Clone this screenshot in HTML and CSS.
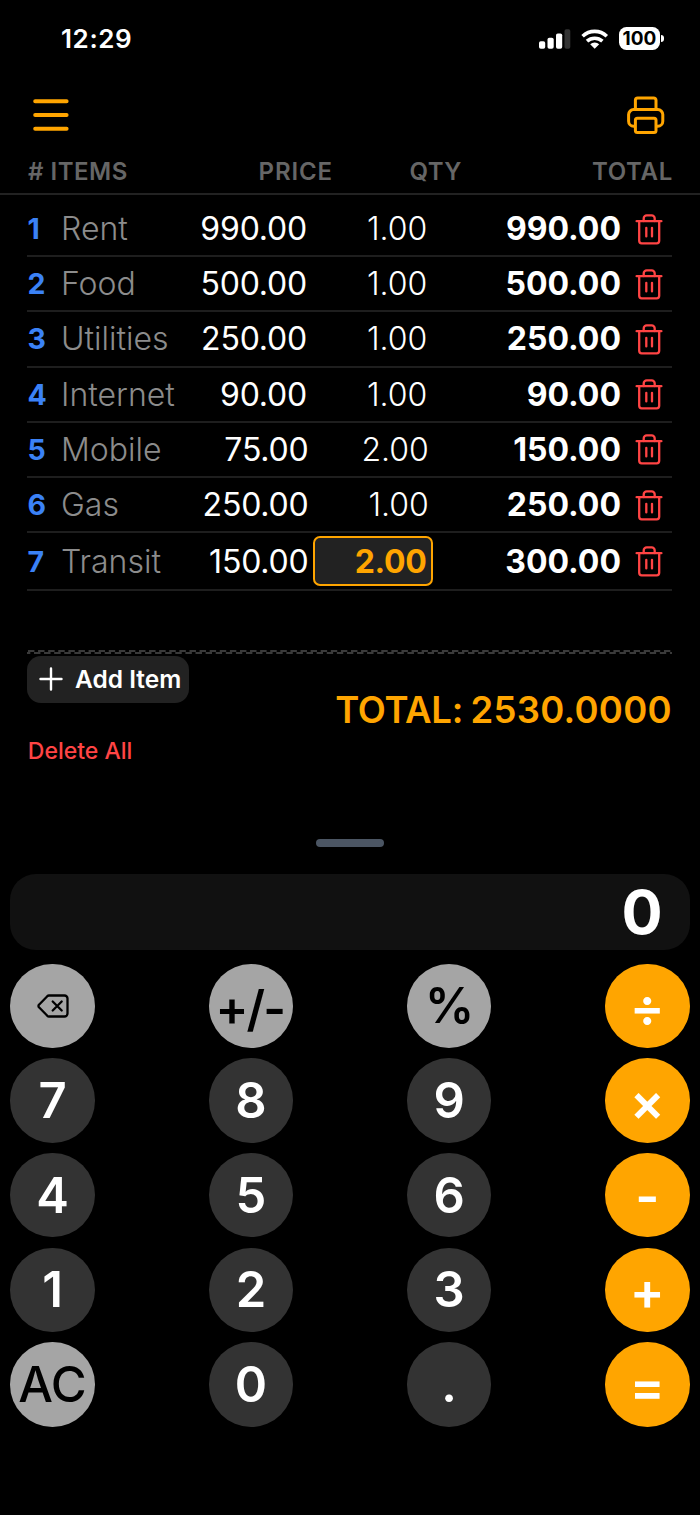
FILE: index.html
```
<!DOCTYPE html>
<html lang="en">
<head>
    <meta charset="UTF-8">
    <meta name="viewport" content="width=device-width, initial-scale=1.0">
    <title>Item Calculator</title>
    <link rel="stylesheet" href="styles.css">
</head>
<body>
    <svg class="sprite" aria-hidden="true">
        <symbol id="trash" viewBox="0 0 28 32">
            <g fill="none" stroke="currentColor" stroke-width="2.3" stroke-linecap="round" stroke-linejoin="round">
                <path d="M1.6 8.2h24.800"/>
                <path d="M8.7 8V5.4a3 3 0 0 1 3-3h5a3 3 0 0 1 3 3V8"/>
                <path d="M4.2 8.2v19.6a2.5 2.5 0 0 0 2.5 2.5h15a2.5 2.5 0 0 0 2.5-2.5v-19.6"/>
                <path d="M11.300 14.800v8.600M17 14.800v8.600"/>
            </g>
        </symbol>
    </svg>
    <main>
        <div class="status-bar">
            <span class="clock">12:29</span>
            <div class="status-icons">
                <svg class="signal" width="32" height="20" viewBox="0 0 32 20" fill="#fff">
                    <rect x="0" y="12.3" width="6.2" height="7.4" rx="1.8"/>
                    <rect x="8.5" y="8.7" width="6.2" height="11" rx="1.8"/>
                    <rect x="17" y="4.5" width="6.2" height="15.2" rx="1.8"/>
                    <rect x="25.5" y="0.2" width="5.8" height="19.5" rx="1.8" fill="#333"/>
                </svg>
                <svg class="wifi" width="28" height="20" viewBox="0 0 28 20">
                    <g fill="none" stroke="#fff" stroke-width="3.6">
                        <path d="M1.6 7.2a17.6 17.6 0 0 1 24.2 0"/>
                        <path d="M6 12.2a11.4 11.4 0 0 1 15.4 0"/>
                    </g>
                    <path d="M13.7 19.8l-4.5-4.5a6.5 6.5 0 0 1 9 0z" fill="#fff"/>
                </svg>
                <div class="battery">100</div>
            </div>
        </div>

        <header>
            <svg class="menu" width="38" height="36" viewBox="0 0 38 36" stroke="#ffa500" stroke-width="4" stroke-linecap="round">
                <path d="M3.2 4.2h31.4M3.2 18h31.4M3.2 31.8h31.4"/>
            </svg>
            <svg class="printer" width="40" height="40" viewBox="0 0 40 40" fill="none" stroke="#ffa500" stroke-width="3" stroke-linejoin="round">
                <path d="M9.4 31.2H7.6a5 5 0 0 1-5-5v-6.6a5 5 0 0 1 5-5h24.2a5 5 0 0 1 5 5v6.6a5 5 0 0 1-5 5H30"/>
                <rect x="9.4" y="23.2" width="20.6" height="14.4" rx="2"/>
                <path d="M9.4 14.6V5.3A2.3 2.3 0 0 1 11.7 3h16A2.3 2.3 0 0 1 30 5.3v9.3"/>
            </svg>
        </header>

        <div class="columns">
            <span class="col-items"># ITEMS</span>
            <span class="col-price">PRICE</span>
            <span class="col-qty">QTY</span>
            <span class="col-total">TOTAL</span>
        </div>

        <div class="items">
            <div class="row">
                <span class="num">1</span><span class="name">Rent</span><span class="price">990.00</span><span class="qty">1.00</span><span class="total">990.00</span>
                <svg class="trash"><use href="#trash"/></svg>
            </div>
            <div class="row">
                <span class="num">2</span><span class="name">Food</span><span class="price">500.00</span><span class="qty">1.00</span><span class="total">500.00</span>
                <svg class="trash"><use href="#trash"/></svg>
            </div>
            <div class="row">
                <span class="num">3</span><span class="name">Utilities</span><span class="price">250.00</span><span class="qty">1.00</span><span class="total">250.00</span>
                <svg class="trash"><use href="#trash"/></svg>
            </div>
            <div class="row">
                <span class="num">4</span><span class="name">Internet</span><span class="price">90.00</span><span class="qty">1.00</span><span class="total">90.00</span>
                <svg class="trash"><use href="#trash"/></svg>
            </div>
            <div class="row wide">
                <span class="num">5</span><span class="name">Mobile</span><span class="price">75.00</span><span class="qty">2.00</span><span class="total">150.00</span>
                <svg class="trash"><use href="#trash"/></svg>
            </div>
            <div class="row wide">
                <span class="num">6</span><span class="name">Gas</span><span class="price">250.00</span><span class="qty">1.00</span><span class="total">250.00</span>
                <svg class="trash"><use href="#trash"/></svg>
            </div>
            <div class="row wide editing">
                <span class="num">7</span><span class="name">Transit</span><span class="price">150.00</span><span class="qty active">2.00</span><span class="total">300.00</span>
                <svg class="trash"><use href="#trash"/></svg>
            </div>
        </div>

        <div class="summary">
            <div class="tear"></div>
            <div class="summary-body">
                <div class="actions">
                    <button class="add">
                        <svg width="24" height="24" viewBox="0 0 24 24" stroke="#fff" stroke-width="2.4" stroke-linecap="round">
                            <path d="M12 1.5v21M1.5 12h21"/>
                        </svg>
                        Add Item
                    </button>
                    <button class="delete">Delete All</button>
                </div>
                <div class="grand-total">TOTAL: <span class="amount">2530.0000</span></div>
            </div>
        </div>

        <div class="handle"></div>
        <div class="screen">0</div>

        <div class="keys">
            <button class="key light">
                <svg width="32" height="24" viewBox="0 0 32 24" fill="none" stroke="#000" stroke-width="2.3" stroke-linecap="round" stroke-linejoin="round">
                    <path d="M12 1.5h15.5a3 3 0 0 1 3 3v15a3 3 0 0 1-3 3H12a2.5 2.5 0 0 1-1.7-.7L2 13.300a1.800 1.800 0 0 1 0-2.600l8.300-8.500A2.500 2.500 0 0 1 12 1.500z"/>
                    <path d="M15.7 7.5l9 9M24.7 7.5l-9 9"/>
                </svg>
            </button>
            <button class="key light sign">+/-</button>
            <button class="key light">%</button>
            <button class="key op">÷</button>
            <button class="key">7</button>
            <button class="key">8</button>
            <button class="key">9</button>
            <button class="key op">×</button>
            <button class="key">4</button>
            <button class="key">5</button>
            <button class="key">6</button>
            <button class="key op">-</button>
            <button class="key">1</button>
            <button class="key">2</button>
            <button class="key">3</button>
            <button class="key op">+</button>
            <button class="key light clear">AC</button>
            <button class="key">0</button>
            <button class="key">.</button>
            <button class="key op">=</button>
        </div>
    </main>
</body>
</html>
```

FILE: styles.css
```
* {
    box-sizing: border-box;
}
body {
    margin: 0;
    background-color: #000;
    color: #fff;
    font-family: Inter, "Liberation Sans", sans-serif;
}
main {
    width: 700px;
    height: 1515px;
    display: flex;
    flex-direction: column;
    overflow: hidden;
}
button {
    margin: 0;
    padding: 0;
    border: none;
    background: none;
    font-family: inherit;
    color: inherit;
    cursor: pointer;
}
.sprite {
    display: none;
}

/* status bar */
.status-bar {
    height: 77px;
    padding: 0 40px 0 61px;
    display: flex;
    justify-content: space-between;
    align-items: center;
}
.clock {
    font-size: 26px;
    font-weight: 600;
    letter-spacing: 0.6px;
}
.status-icons {
    display: flex;
    align-items: center;
}
.wifi {
    margin-left: 10px;
}
.battery {
    width: 41px;
    height: 23px;
    margin-left: 10px;
    border-radius: 7.5px;
    background-color: #fff;
    color: #000;
    font-size: 19px;
    font-weight: 700;
    line-height: 23px;
    text-align: center;
    position: relative;
}
.battery::after {
    content: "";
    position: absolute;
    right: -4px;
    top: 8px;
    width: 3px;
    height: 7px;
    border-radius: 0 3px 3px 0;
    background-color: #fff;
}

header {
    height: 76px;
    padding: 0 34px 0 32px;
    display: flex;
    justify-content: space-between;
    align-items: center;
}

/* item list */
.columns {
    height: 42px;
    padding: 0 27px 4px 28px;
    display: flex;
    align-items: center;
    border-bottom: 2px solid #222;
    color: #666;
    font-size: 24px;
    font-weight: 600;
    letter-spacing: 0.5px;
}
.col-items {
    width: 154px;
}
.col-price {
    width: 151px;
    text-align: right;
    letter-spacing: 0.9px;
}
.col-qty {
    width: 129px;
    text-align: right;
}
.col-total {
    flex: 1;
    text-align: right;
    letter-spacing: 0.7px;
}
.items {
    padding: 7px 28px 0 27px;
}
.row {
    height: 55.2px;
    display: flex;
    align-items: center;
    border-bottom: 2px solid #1e1e1e;
    font-size: 32px;
}
.num {
    width: 34px;
    padding-left: 0.5px;
    color: #3b82f6;
    font-size: 28.5px;
    font-weight: 700;
}
.name {
    width: 120px;
    color: #8c8c8c;
    font-weight: 300;
}
.price {
    width: 126px;
    text-align: right;
    letter-spacing: -0.2px;
}
.qty {
    width: 121px;
    padding-right: 0.7px;
    font-weight: 300;
    text-align: right;
}
.total {
    width: 193px;
    font-weight: 700;
    text-align: right;
}
.trash {
    width: 28px;
    height: 32px;
    margin-left: 14px;
    color: #ff4444;
}
.wide .price {
    width: 127.5px;
}
.wide .total {
    width: 191.5px;
}
.editing {
    height: 58px;
}
.editing .active {
    width: 120px;
    height: 50px;
    margin-left: 4.5px;
    margin-right: -3.5px;
    padding-right: 4.5px;
    border: 2px solid #ffa500;
    border-radius: 7px;
    background-color: #222;
    color: #ffa500;
    font-weight: 700;
    line-height: 48px;
    letter-spacing: -0.3px;
}

/* summary under the list */
.summary {
    padding: 59px 28px 0 27px;
}
/* two dashed lines half a step apart */
.tear {
    height: 4px;
    background-image:
        linear-gradient(90deg, #3a3a3a 6px, transparent 6px),
        linear-gradient(90deg, #3a3a3a 6px, transparent 6px);
    background-size: 10.1px 2px;
    background-position: 1px 0, 7px 2px;
    background-repeat: repeat-x;
}
.summary-body {
    padding-top: 1.5px;
    display: flex;
    justify-content: space-between;
    align-items: center;
}
.actions {
    display: flex;
    flex-direction: column;
    align-items: flex-start;
}
.add {
    width: 162px;
    height: 47px;
    padding-left: 12px;
    display: flex;
    align-items: center;
    gap: 12px;
    border-radius: 14px;
    background-color: #222;
    font-size: 24.5px;
    font-weight: 600;
    white-space: nowrap;
}
.delete {
    height: 47px;
    margin-top: 24.5px;
    padding-left: 0.8px;
    color: #ff4444;
    font-size: 23px;
    font-weight: 500;
}
.grand-total {
    padding-bottom: 9px;
    color: #ffa500;
    font-size: 36.5px;
    font-weight: 600;
    letter-spacing: -0.3px;
    word-spacing: -1.5px;
}
.amount {
    letter-spacing: 0.3px;
}

/* calculator */
.handle {
    width: 68px;
    height: 8px;
    margin: 65px auto 0;
    border-radius: 4px;
    background-color: #4b5563;
}
.screen {
    height: 76px;
    margin: 27px 10.4px 0;
    padding-right: 27px;
    border-radius: 26px;
    background-color: #111;
    font-size: 61px;
    font-weight: 700;
    line-height: 76px;
    text-align: right;
}
.keys {
    padding: 13.4px 10.4px 0;
    display: grid;
    grid-template-columns: repeat(4, 84.6px);
    justify-content: space-between;
    row-gap: 10.1px;
}
.key {
    height: 84.6px;
    display: flex;
    justify-content: center;
    align-items: center;
    border-radius: 50%;
    background-color: #333;
    color: #fff;
    font-size: 49px;
    font-weight: 600;
}
.light {
    background-color: #a5a5a5;
    color: #000;
    letter-spacing: -1px;
}
.sign {
    padding: 5px 2px 0 0;
    letter-spacing: -1.8px;
}
.clear {
    padding-right: 1px;
    font-weight: 500;
    letter-spacing: -0.5px;
}
.op {
    padding-top: 3px;
    background-color: #ffa500;
    font-size: 52px;
}
```
